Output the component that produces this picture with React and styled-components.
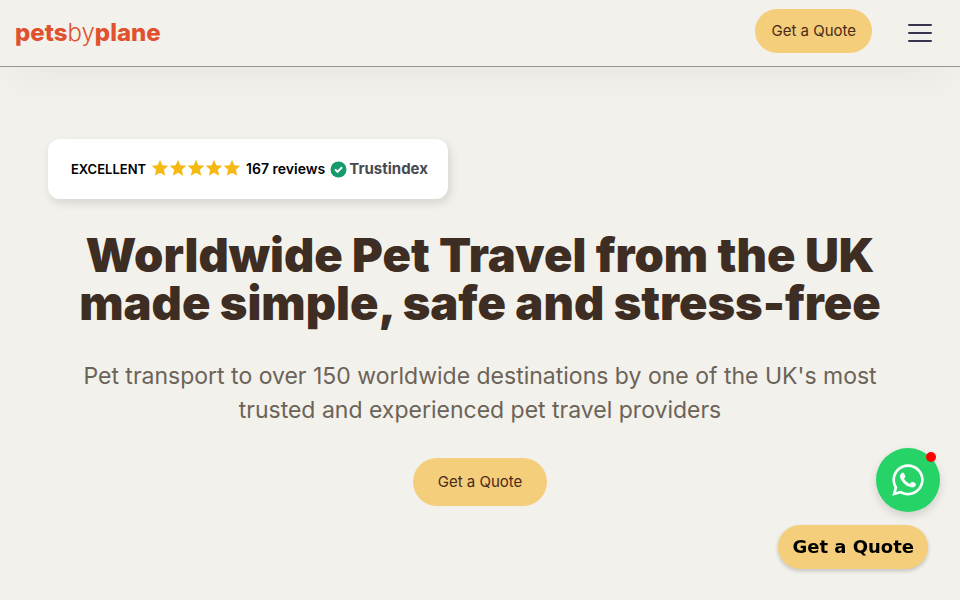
import React from 'react';

import styled, { createGlobalStyle, css } from 'styled-components';

import { FaWhatsapp } from 'react-icons/fa';

const GlobalStyle = createGlobalStyle`
    * {
        box-sizing: border-box;
    }

    body {
        margin: 0;
        background-color: #f2f1eb;
        color: #3d2d22;
        font-family: 'Inter', sans-serif;
    }

    h1, p {
        margin: 0;
    }
`;

const Header = styled.header`
    display: flex;
    align-items: center;
    justify-content: space-between;
    height: 67px;
    padding: 0 28px 0 15px;
    border-bottom: 1px solid #99968f;
    box-shadow: 0 20px 40px -8px rgba(0, 0, 0, 0.04);
`;

const Logo = styled.a`
    color: #e0522f;
    font-size: 24px;
    font-weight: 800;
    line-height: 32px;
    text-decoration: none;
`;

const LogoLight = styled.span`
    font-weight: 300;
`;

const Actions = styled.div`
    display: flex;
    align-items: center;
    gap: 36px;
    padding-bottom: 4px;
`;

const pill = css`
    border: 0;
    border-radius: 24px;
    background-color: #f4ce7b;
    cursor: pointer;
`;

const QuoteButton = styled.button`
    ${pill}
    height: ${props => props.$large ? '48px' : '44px'};
    padding: 0 ${props => props.$large ? '25px' : '16px'};
    color: #4b2a17;
    font-family: 'Inter', sans-serif;
    font-size: 15px;
    line-height: 24px;
`;

const MenuButton = styled.button`
    display: flex;
    flex-direction: column;
    gap: 6px;
    width: 24px;
    padding: 4px 0 0;
    border: 0;
    background: none;
    cursor: pointer;
`;

const MenuBar = styled.span`
    width: 100%;
    height: 2px;
    border-radius: 1px;
    background-color: #38344e;
`;

const Hero = styled.main`
    display: flex;
    flex-direction: column;
    align-items: center;
    padding: 72px 48px;
    text-align: center;
`;

const Reviews = styled.a`
    display: flex;
    align-items: center;
    align-self: flex-start;
    gap: 5px;
    height: 60px;
    padding: 0 20px 0 23px;
    border-radius: 12px;
    background-color: #fff;
    box-shadow: 2px 4px 10px rgba(0, 0, 0, 0.12);
    color: #000;
    font-size: 14px;
    font-weight: 600;
    line-height: 20px;
    text-decoration: none;
    white-space: nowrap;
`;

const Rating = styled.span`
    font-size: 13px;
`;

const Stars = styled.span`
    display: flex;
    padding-bottom: 2px;
`;

const Trustindex = styled.span`
    display: flex;
    align-items: center;
    gap: 2px;
    color: #474a50;
    font-size: 15px;
    font-weight: 700;
`;

const Title = styled.h1`
    margin-top: 32px;
    font-size: 47px;
    font-weight: 900;
    line-height: 48px;
`;

const Intro = styled.p`
    margin-top: 32px;
    color: #6c6358;
    font-size: 23px;
    line-height: 34px;
`;

const HeroAction = styled.div`
    margin-top: 31px;
`;

const Floating = styled.aside`
    position: fixed;
    right: 20px;
    bottom: 31px;
    display: flex;
    flex-direction: column;
    align-items: flex-end;
    gap: 13px;
`;

const ChatButton = styled.button`
    position: relative;
    display: flex;
    align-items: center;
    justify-content: center;
    width: 64px;
    height: 64px;
    padding: 0;
    border: 0;
    border-radius: 50%;
    background-color: #25d366;
    box-shadow: 0 4px 10px rgba(0, 0, 0, 0.14);
    color: #fff;
    font-size: 36px;
    cursor: pointer;
`;

const Dot = styled.span`
    position: absolute;
    top: 4px;
    right: 4px;
    width: 10px;
    height: 10px;
    border-radius: 50%;
    background-color: #f00;
`;

const StickyQuote = styled.button`
    ${pill}
    height: 44px;
    margin-right: 12px;
    padding: 0 14px 2px;
    box-shadow: 0 2px 4px rgba(0, 0, 0, 0.2);
    color: #000;
    font-family: 'DejaVu Sans', sans-serif;
    font-size: 18px;
    font-weight: 700;
`;

const Star = () => (
    <svg width="18" height="18" viewBox="0 0 18 18" aria-hidden="true">
        <path d="M9 0.8l2.3 5.4 6.1.6-4.6 4 1.4 6L9 13.7l-5.2 3.1 1.4-6-4.6-4 6.1-.6z" fill="#f5b913" />
    </svg>
);

const Check = () => (
    <svg width="17" height="17" viewBox="0 0 17 17" aria-hidden="true">
        <circle cx="8.5" cy="8.5" r="8" fill="#159a6c" />
        <path d="M5 8.4l2.5 2.4 4.6-4.6" fill="none" stroke="#fff" strokeWidth="2" />
    </svg>
);

export default () => {
    return <>
        <GlobalStyle />
        <Header>
            <Logo href="#">pets<LogoLight>by</LogoLight>plane</Logo>
            <Actions>
                <QuoteButton>Get a Quote</QuoteButton>
                <MenuButton aria-label="Open menu">
                    <MenuBar />
                    <MenuBar />
                    <MenuBar />
                </MenuButton>
            </Actions>
        </Header>
        <Hero>
            <Reviews href="#">
                <Rating>EXCELLENT</Rating>
                <Stars>
                    {[1, 2, 3, 4, 5].map(n => <Star key={n} />)}
                </Stars>
                <span>167 reviews</span>
                <Trustindex><Check />Trustindex</Trustindex>
            </Reviews>
            <Title>Worldwide Pet Travel from the UK<br />made simple, safe and stress-free</Title>
            <Intro>Pet transport to over 150 worldwide destinations by one of the UK's most trusted and experienced pet travel providers</Intro>
            <HeroAction>
                <QuoteButton $large>Get a Quote</QuoteButton>
            </HeroAction>
        </Hero>
        <Floating>
            <ChatButton aria-label="Chat on WhatsApp">
                <FaWhatsapp />
                <Dot />
            </ChatButton>
            <StickyQuote>Get a Quote</StickyQuote>
        </Floating>
    </>
}
